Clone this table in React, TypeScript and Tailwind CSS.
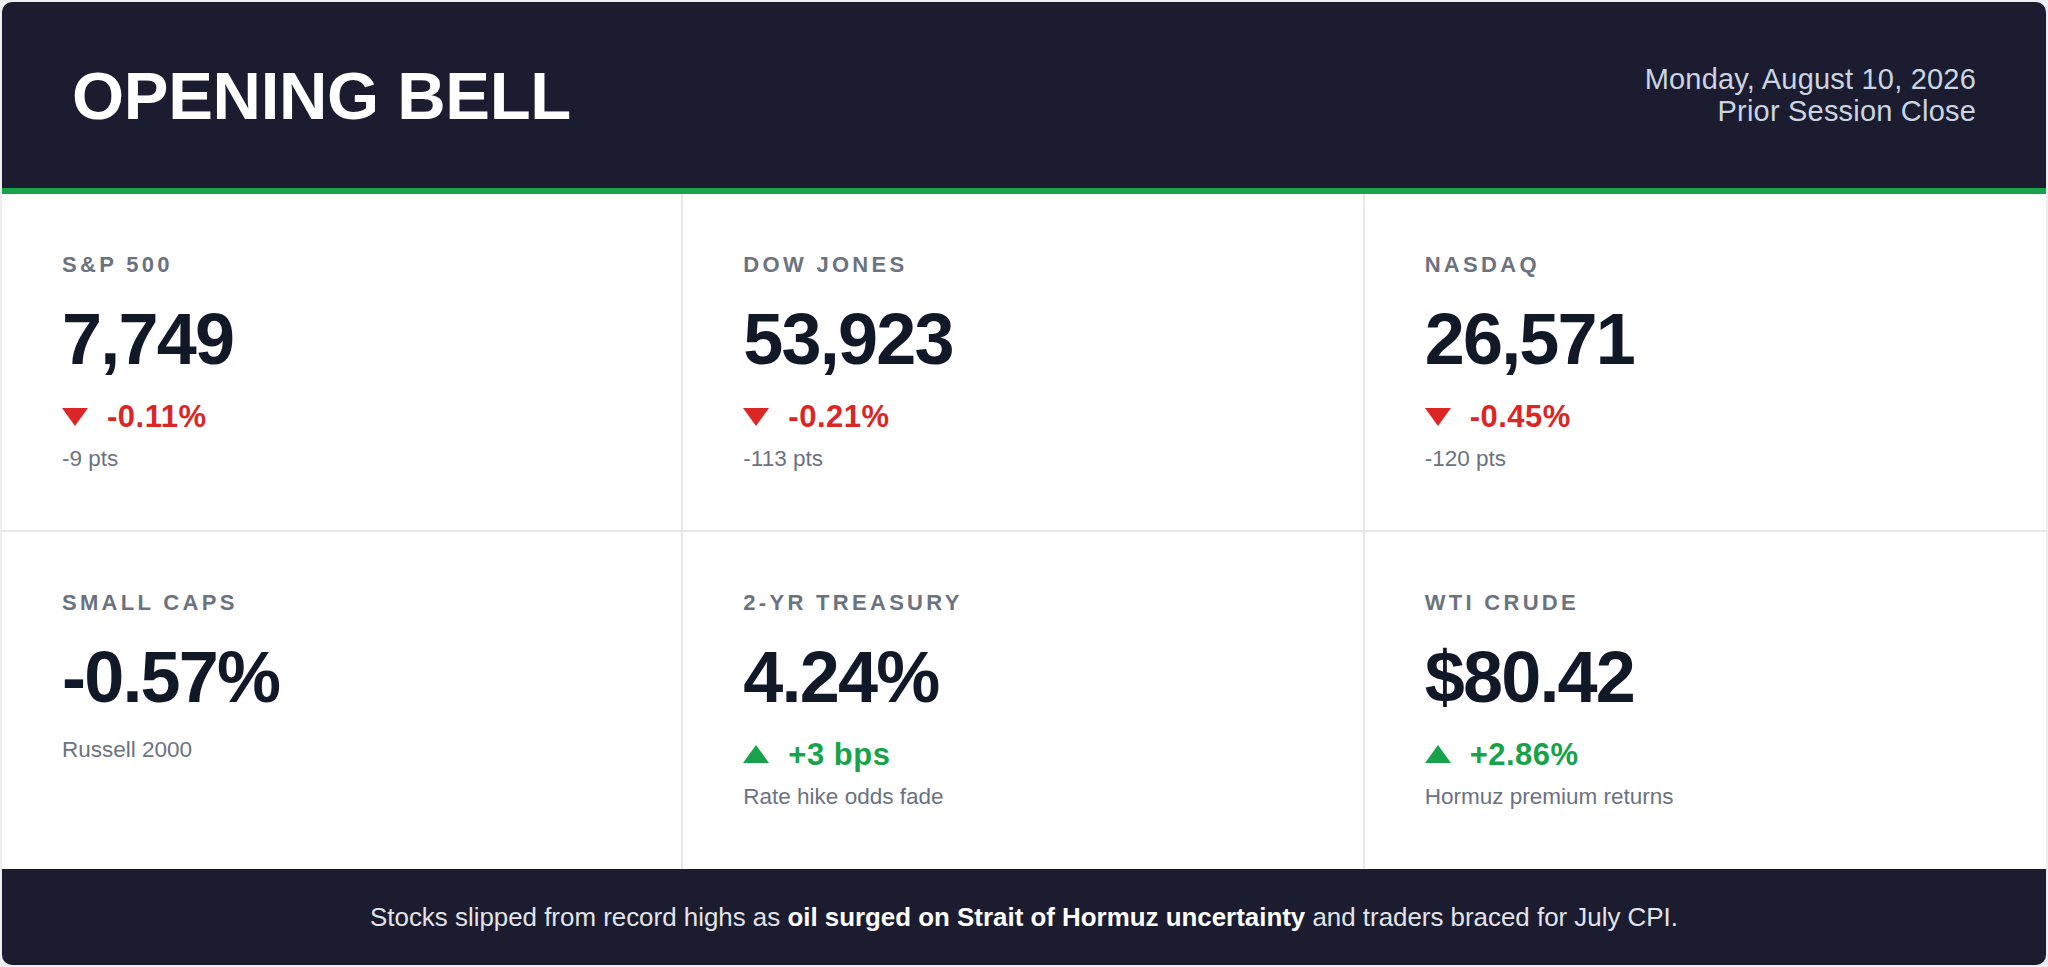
type Metric = {
  label: string;
  value: string;
  change?: { dir: "up" | "down"; text: string };
  sub: string;
};

const metrics: Metric[] = [
  { label: "S&P 500", value: "7,749", change: { dir: "down", text: "-0.11%" }, sub: "-9 pts" },
  { label: "DOW JONES", value: "53,923", change: { dir: "down", text: "-0.21%" }, sub: "-113 pts" },
  { label: "NASDAQ", value: "26,571", change: { dir: "down", text: "-0.45%" }, sub: "-120 pts" },
  { label: "SMALL CAPS", value: "-0.57%", sub: "Russell 2000" },
  { label: "2-YR TREASURY", value: "4.24%", change: { dir: "up", text: "+3 bps" }, sub: "Rate hike odds fade" },
  { label: "WTI CRUDE", value: "$80.42", change: { dir: "up", text: "+2.86%" }, sub: "Hormuz premium returns" },
];

function Arrow({ dir }: { dir: "up" | "down" }) {
  return (
    <svg width="26" height="18" viewBox="0 0 26 18" className="mr-[19px] shrink-0">
      {dir === "down" ? (
        <polygon points="0,0 26,0 13,18" fill="#dc2626" />
      ) : (
        <polygon points="13,0 26,18 0,18" fill="#16a34a" />
      )}
    </svg>
  );
}

function MetricCell({ m, idx }: { m: Metric; idx: number }) {
  const right = idx % 3 !== 2;
  const top = idx < 3;
  return (
    <div
      className={
        "flex flex-col pl-[60px] pt-[58px] " +
        (right ? "border-r-2 border-r-[#e5e7eb] " : "") +
        (top ? "border-b-2 border-b-[#e5e7eb]" : "")
      }
    >
      <div className="text-[22px] leading-[26px] font-bold tracking-[0.15em] text-[#6b7280]">{m.label}</div>
      <div className="mt-[25px] text-[72px] leading-none font-bold tracking-[-0.025em] text-[#111827]">{m.value}</div>
      {m.change && (
        <div
          className={
            "mt-[26px] flex items-center text-[31px] leading-none font-bold tracking-[0.5px] " +
            (m.change.dir === "down" ? "text-[#dc2626]" : "text-[#16a34a]")
          }
        >
          <Arrow dir={m.change.dir} />
          <span>{m.change.text}</span>
        </div>
      )}
      <div className={"text-[22.5px] leading-[26px] text-[#6b7280] " + (m.change ? "mt-[14px]" : "mt-[24px]")}>
        {m.sub}
      </div>
    </div>
  );
}

export default function App() {
  return (
    <div className="h-screen w-full bg-[#eceef1] p-[2px] font-['Liberation_Sans',Arial,sans-serif]">
      <div className="flex h-full flex-col overflow-hidden rounded-[10px] bg-white">
        {/* Header */}
        <header className="flex h-[192px] shrink-0 items-center justify-between border-b-[6px] border-b-[#16a34a] bg-[#1b1c30] px-[70px]">
          <h1 className="text-[67px] leading-none font-bold tracking-[-0.3px] text-white">OPENING BELL</h1>
          <div className="text-right text-[29px] leading-[32px] tracking-[0.2px] text-[#cbd5e1]">
            <div>Monday, August 10, 2026</div>
            <div>Prior Session Close</div>
          </div>
        </header>

        {/* Metrics grid */}
        <div className="grid flex-1 grid-cols-3 grid-rows-2">
          {metrics.map((m, i) => (
            <MetricCell key={m.label} m={m} idx={i} />
          ))}
        </div>

        {/* Footer */}
        <footer className="flex h-[96px] shrink-0 items-center justify-center bg-[#1b1c30] text-[25.9px] text-[#e2e4e9]">
          <p>
            Stocks slipped from record highs as{" "}
            <strong className="font-bold text-white">oil surged on Strait of Hormuz uncertainty</strong> and traders
            braced for July CPI.
          </p>
        </footer>
      </div>
    </div>
  );
}
